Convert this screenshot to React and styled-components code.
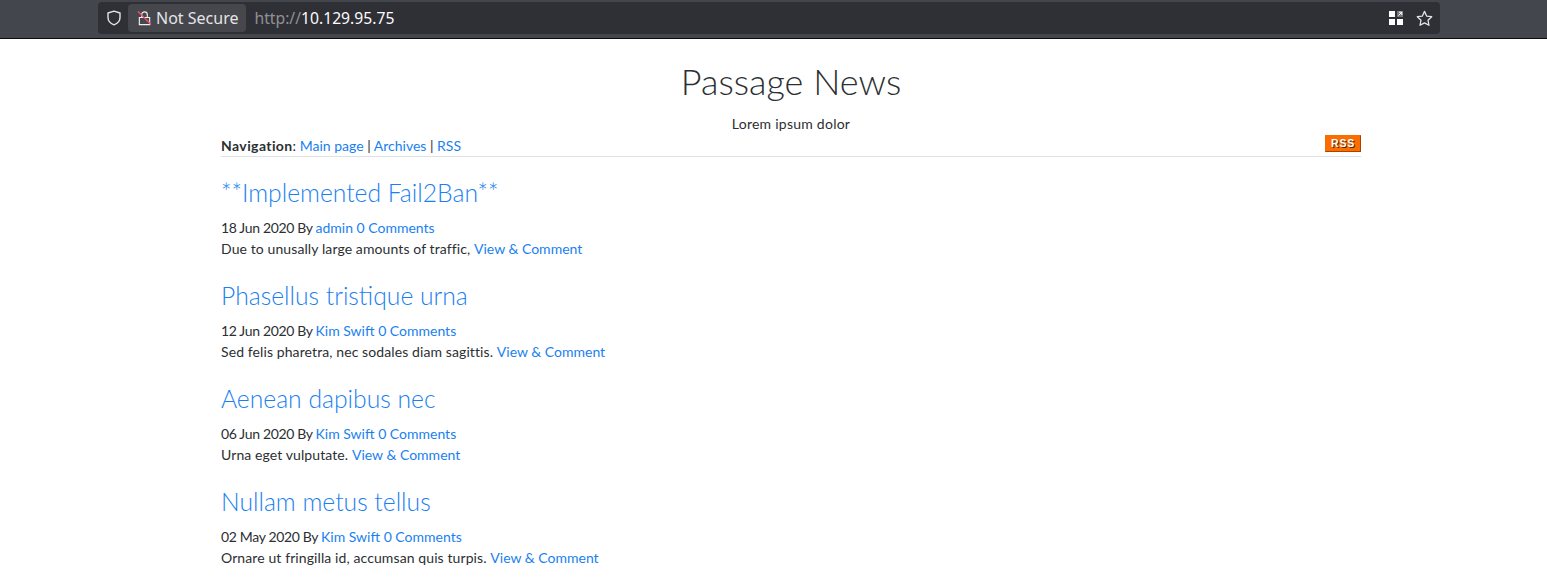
import styled, { createGlobalStyle } from "styled-components";

const posts = [
  { title: "**Implemented Fail2Ban**", date: "18 Jun 2020", author: "admin", text: "Due to unusally large amounts of traffic," },
  { title: "Phasellus tristique urna", date: "12 Jun 2020", author: "Kim Swift", text: "Sed felis pharetra, nec sodales diam sagittis." },
  { title: "Aenean dapibus nec", date: "06 Jun 2020", author: "Kim Swift", text: "Urna eget vulputate." },
  { title: "Nullam metus tellus", date: "02 May 2020", author: "Kim Swift", text: "Ornare ut fringilla id, accumsan quis turpis." },
];

const GlobalStyle = createGlobalStyle`
  html, body {
    margin: 0;
    height: 581px;
    overflow: hidden;
    background: #fff;
  }
`;

const App = () => {
  return (
    <>
      <GlobalStyle />
      <Toolbar>
        <UrlBar>
          <ShieldIcon viewBox="0 0 16 16">
            <path d="M8 1.2 2 3v4.6c0 3.4 2.6 6 6 7.2 3.4-1.2 6-3.8 6-7.2V3L8 1.2z" fill="none" stroke="#e4e4e6" strokeWidth="1.4" strokeLinejoin="round" />
          </ShieldIcon>
          <SecureBadge>
            <LockIcon viewBox="0 0 16 16">
              <path d="M2.5 7.5h11v7.5h-11zM5 7.5V4.5a3 3 0 0 1 6 0v3" fill="none" stroke="#f0f0f2" strokeWidth="1.2" />
              <path d="M1 1 15 15" stroke="#e8536a" strokeWidth="1.4" />
            </LockIcon>
            Not Secure
          </SecureBadge>
          <Url><UrlScheme>http://</UrlScheme>10.129.95.75</Url>
          <UrlActions>
            <ReaderIcon viewBox="0 0 14 14">
              <path d="M0 0h6v6H0zM0 8h6v6H0zM8 8h6v6H8z" fill="#fff" />
              <path d="M8 0h6v6H8z" fill="#77787d" />
              <path d="M9.5 4.5 12.5 1.5M10 1.2h2.8V4" fill="none" stroke="#fff" strokeWidth="1" />
            </ReaderIcon>
            <StarIcon viewBox="0 0 16 16">
              <path d="M8 1.3l2 4.4 4.8.6-3.5 3.3.9 4.8L8 12.1l-4.2 2.3.9-4.8L1.2 6.3 6 5.7z" fill="none" stroke="#e4e4e6" strokeWidth="1.2" strokeLinejoin="round" />
            </StarIcon>
          </UrlActions>
        </UrlBar>
      </Toolbar>
      <Page>
        <SiteTitle>Passage News</SiteTitle>
        <Tagline>Lorem ipsum dolor</Tagline>
        <NavRow>
          <div>
            <NavLabel>Navigation</NavLabel>: <Link>Main page</Link> | <Link>Archives</Link> | <Link>RSS</Link>
          </div>
          <RssBadge>RSS</RssBadge>
        </NavRow>
        {posts.map((post) => (
          <Post key={post.title}>
            <PostTitle>{post.title}</PostTitle>
            <PostLine>
              <PostDate>{post.date} By </PostDate><Link>{post.author}</Link> <Link>0 Comments</Link>
            </PostLine>
            <PostLine>
              <PostText>{post.text} </PostText><Link>View &amp; Comment</Link>
            </PostLine>
          </Post>
        ))}
      </Page>
    </>
  );
};

export default App;

const Toolbar = styled.div`
  height: 39px;
  box-sizing: border-box;
  background: #44464e;
  border-bottom: 1px solid #0c0c0d;
  display: flex;
  align-items: flex-start;
  padding: 2px 107px 0 98px;
`;

const UrlBar = styled.div`
  flex: 1;
  height: 32px;
  background: #2f3035;
  border-radius: 4px;
  display: flex;
  align-items: center;
  padding: 0 7px 0 8px;
  font-family: "Noto Sans", sans-serif;
  font-size: 16px;
  color: #fbfbfe;
`;

const ShieldIcon = styled.svg`
  width: 16px;
  height: 16px;
`;

const SecureBadge = styled.div`
  display: flex;
  align-items: center;
  gap: 4px;
  height: 28px;
  margin-left: 6px;
  padding: 0 8px 0 9px;
  background: #46474d;
  border-radius: 4px;
  color: #e4e4e6;
`;

const LockIcon = styled.svg`
  width: 15px;
  height: 16px;
`;

const Url = styled.div`
  margin-left: 8px;
  font-size: 15.7px;
`;

const UrlScheme = styled.span`
  color: #8f9095;
`;

const UrlActions = styled.div`
  margin-left: auto;
  display: flex;
  align-items: center;
  gap: 13px;
`;

const ReaderIcon = styled.svg`
  width: 14px;
  height: 14px;
`;

const StarIcon = styled.svg`
  width: 17px;
  height: 17px;
`;

const Page = styled.div`
  width: 1140px;
  margin-left: 221px;
  font-family: "Lato", sans-serif;
  font-size: 14px;
  color: #2b2f33;
`;

const SiteTitle = styled.h1`
  margin: 20px 0 0;
  font-size: 36px;
  line-height: 45px;
  font-weight: 300;
  text-align: center;
`;

const Tagline = styled.p`
  margin: 9px 0 0;
  line-height: 21px;
  text-align: center;
  letter-spacing: 0.25px;
`;

const NavRow = styled.div`
  height: 23px;
  border-bottom: 1px solid #dee2e6;
  display: flex;
  justify-content: space-between;
  align-items: flex-start;
  line-height: 21px;
  padding-top: 1px;
  box-sizing: border-box;
`;

const NavLabel = styled.strong`
  letter-spacing: 0.4px;
`;

const RssBadge = styled.div`
  width: 36px;
  height: 17px;
  box-sizing: border-box;
  background: #fb6d00;
  border: 1px solid #f07000;
  border-right-color: #a84400;
  border-bottom-color: #a84400;
  color: #fff;
  font-family: "Liberation Sans", sans-serif;
  font-size: 10.5px;
  font-weight: 700;
  letter-spacing: 0.8px;
  line-height: 14px;
  text-align: center;
  text-shadow: 1px 1px 0 #5a2800;
`;

const Link = styled.a`
  color: #1a7ff0;
  cursor: pointer;
`;

const Post = styled.article`
  height: 103px;
  padding-top: 18px;
  box-sizing: border-box;
`;

const PostTitle = styled.h2`
  margin: 0 0 6px;
  font-size: 24.7px;
  line-height: 36px;
  font-weight: 300;
  color: #1a7ff0;
`;

const PostLine = styled.div`
  line-height: 21px;
`;

const PostDate = styled.span`
  letter-spacing: -0.35px;
`;

const PostText = styled.span`
  letter-spacing: 0.1px;
`;
